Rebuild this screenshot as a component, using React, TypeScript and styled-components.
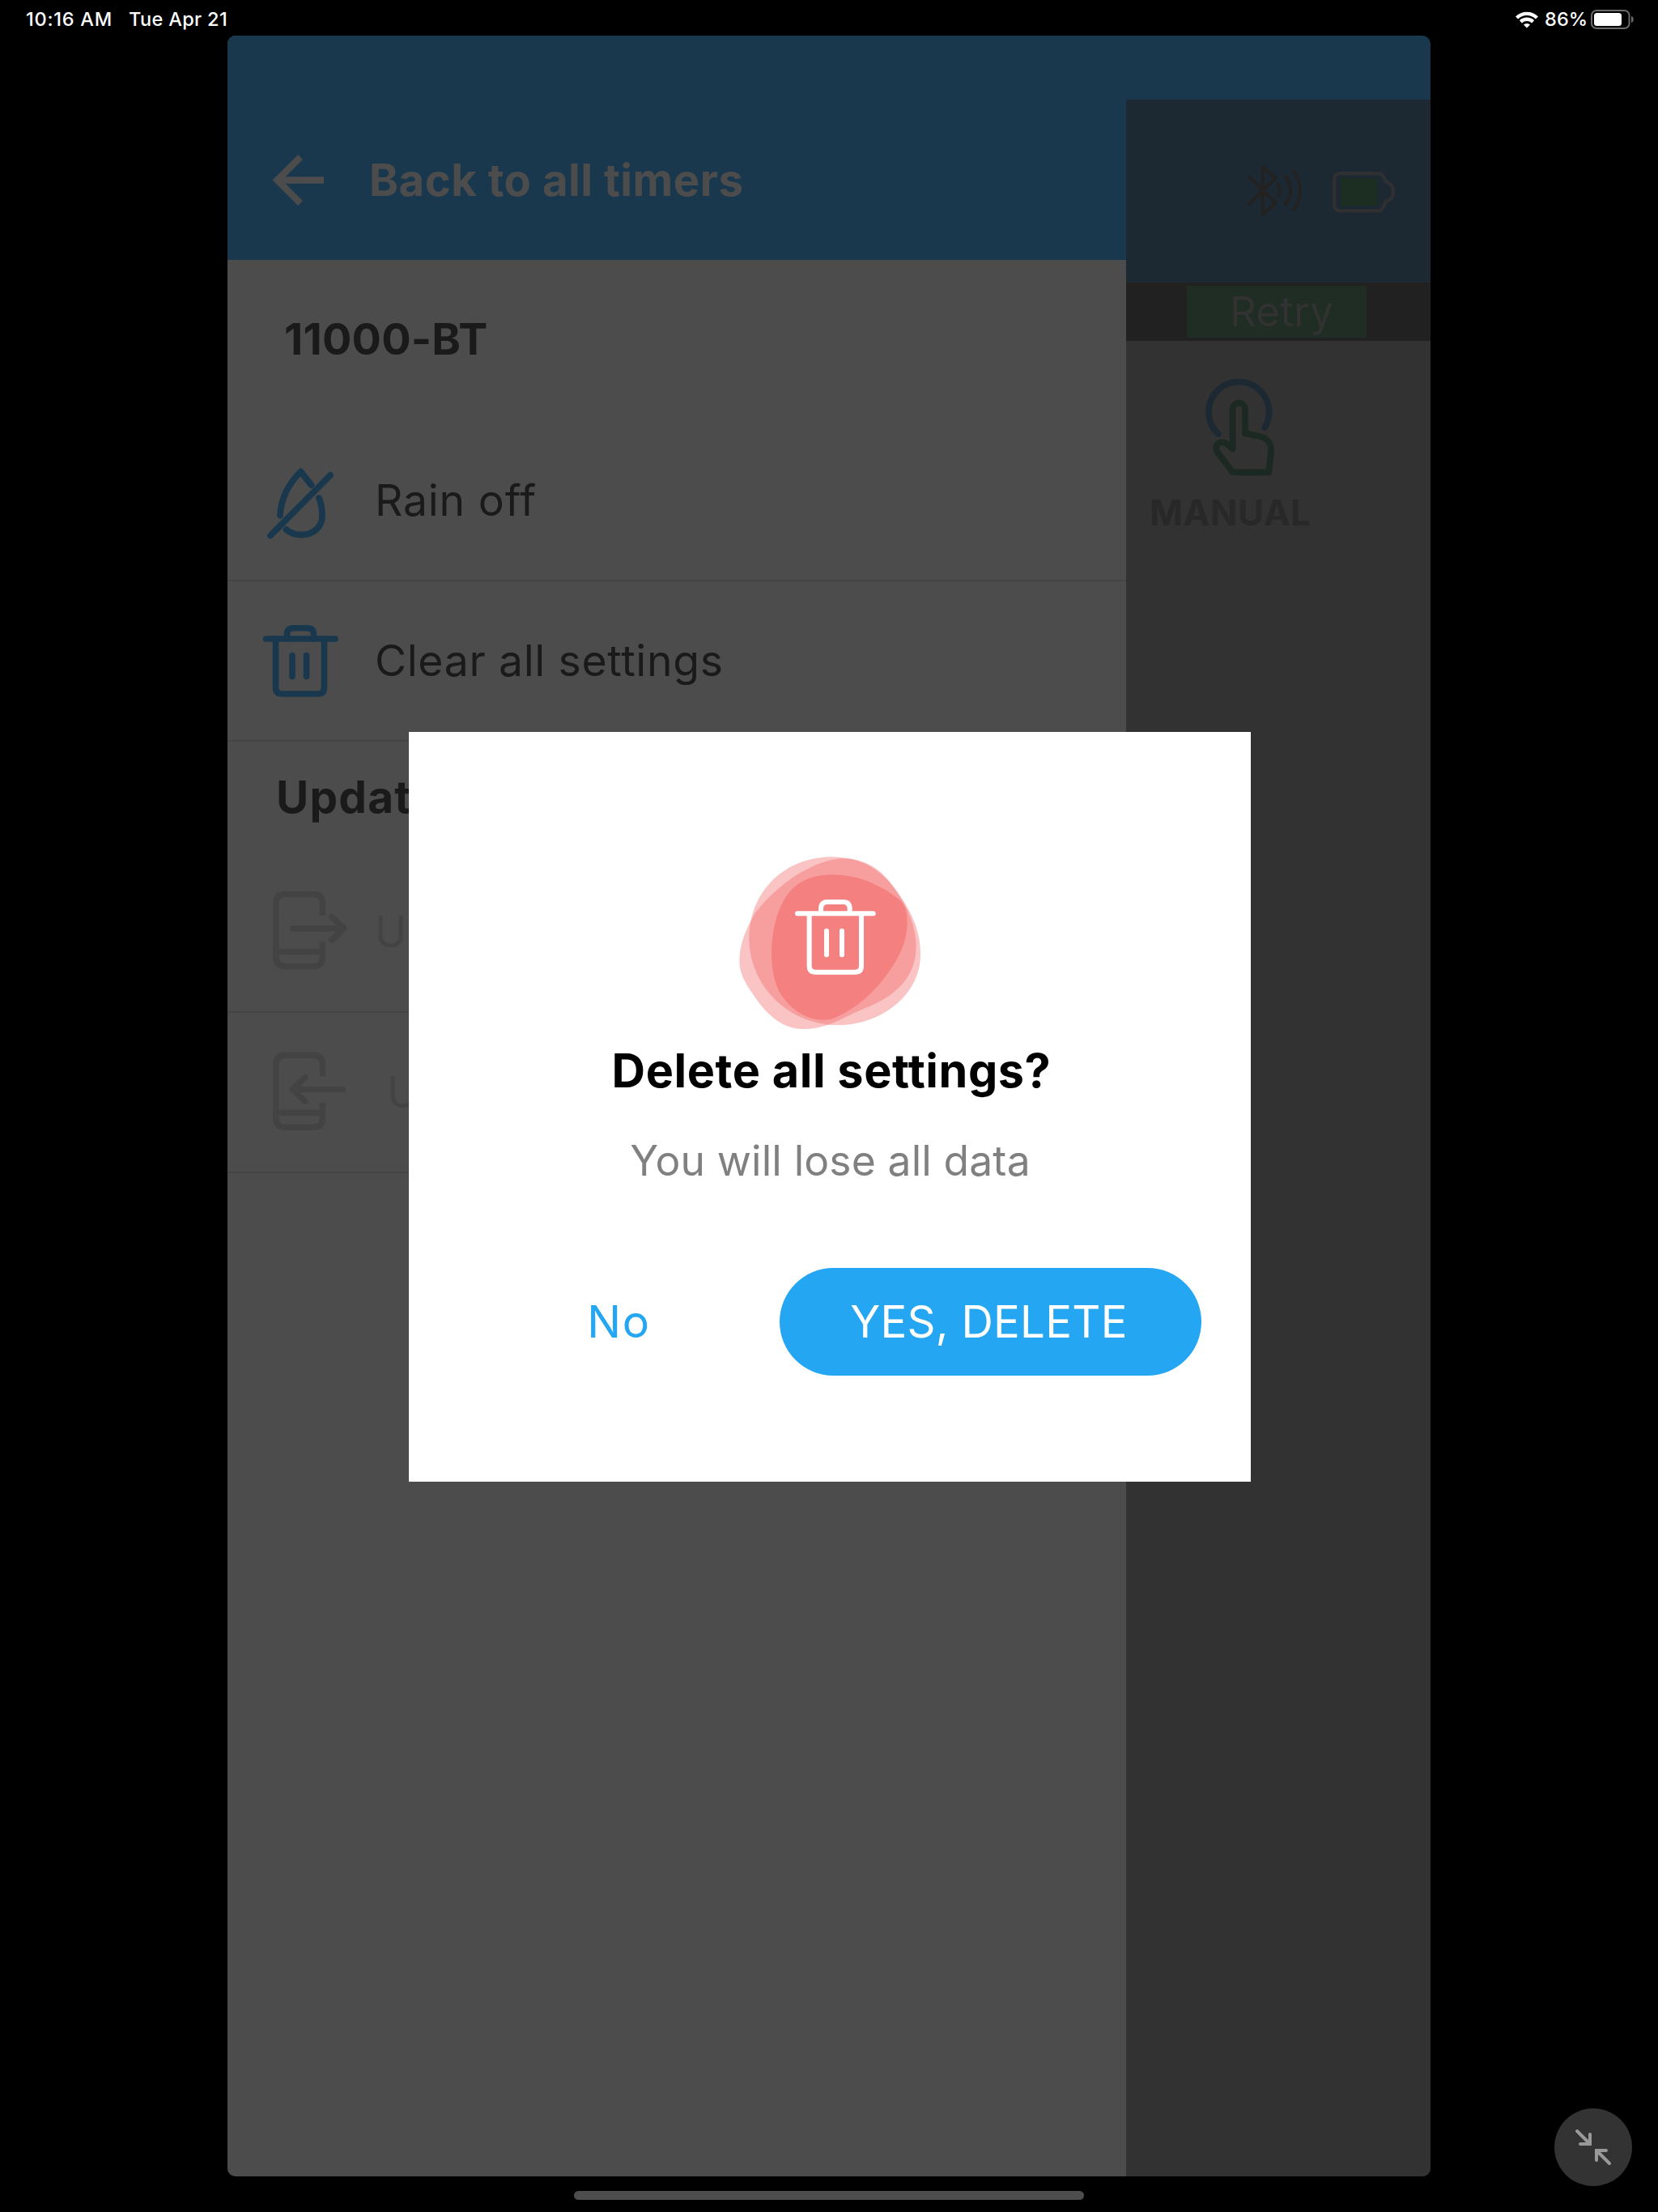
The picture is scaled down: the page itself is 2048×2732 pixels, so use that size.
import React from "react";
import styled, { createGlobalStyle } from "styled-components";

const GlobalStyle = createGlobalStyle`
  *, *::before, *::after { box-sizing: border-box; }
  body { margin: 0; background: #000; font-family: Inter, "Liberation Sans", sans-serif; }
  svg { display: block; flex: none; }
  button { border: 0; background: none; margin: 0; font-family: inherit; }
`;

const Screen = styled.div`
  position: relative;
  width: 2048px;
  height: 2732px;
  background: #000;
  display: flex;
  flex-direction: column;
  align-items: center;
  overflow: hidden;
`;

const Text = styled.span<{ $size: number; $gap: number; $weight?: number; $color: string }>`
  font-size: ${(p) => p.$size}px;
  letter-spacing: ${(p) => p.$gap}px;
  font-weight: ${(p) => p.$weight ?? 400};
  color: ${(p) => p.$color};
  line-height: 60px;
  white-space: nowrap;
`;

/* ---------- status bar ---------- */

const StatusBar = styled.header`
  align-self: stretch;
  height: 44px;
  padding: 4px 30px 0 32px;
  display: flex;
  align-items: center;
`;

const Time = styled.div`
  width: 127px;
  display: flex;
`;

const StatusRight = styled.div`
  margin-left: auto;
  display: flex;
  align-items: center;
`;

const Percent = styled.div`
  width: 65px;
  padding-left: 8px;
  display: flex;
`;

/* ---------- app window ---------- */

const Window = styled.main`
  position: relative;
  width: 1486px;
  height: 2644px;
  border-radius: 10px;
  overflow: hidden;
  background: #1a384d;
  display: flex;
`;

const Drawer = styled.nav`
  width: 1110px;
  background: #4c4c4c;
  display: flex;
  flex-direction: column;
`;

const DrawerHeader = styled.div`
  height: 277px;
  padding: 78px 0 0 55px;
  background: #1a384d;
  display: flex;
  align-items: center;
  gap: 56px;
`;

const DeviceName = styled.div`
  height: 198px;
  padding: 0 0 2px 70px;
  display: flex;
  align-items: center;
`;

const SectionTitle = styled.div`
  height: 137px;
  padding: 0 0 2px 60px;
  display: flex;
  align-items: center;
`;

const MenuRow = styled.div<{ $height?: number; $gap?: number }>`
  height: ${(p) => p.$height ?? 198}px;
  padding-left: 43px;
  border-bottom: 2px solid #444;
  display: flex;
  align-items: center;
  gap: ${(p) => p.$gap ?? 31}px;
`;

/* ---------- dimmed page behind the drawer ---------- */

const Side = styled.section`
  flex: 1;
  margin-top: 79px;
  background: #323232;
  display: flex;
  flex-direction: column;
`;

const SideHeader = styled.div`
  height: 226px;
  padding: 80px 44px 0 0;
  background: #1c2933;
  display: flex;
  justify-content: flex-end;
  align-items: flex-start;
  gap: 35px;
`;

const BatterySlot = styled.div`
  padding-top: 8px;
`;

const RetryStrip = styled.div`
  height: 72px;
  padding-left: 75px;
  background: #212121;
  display: flex;
  align-items: center;
`;

const Retry = styled.button`
  width: 222px;
  height: 64px;
  padding: 0 0 0 53px;
  background: #1f2d25;
  display: flex;
  align-items: center;
`;

const Manual = styled.div`
  padding: 44px 0 0 29px;
  display: flex;
  flex-direction: column;
  gap: 13px;
`;

const HandSlot = styled.div`
  padding-left: 65px;
`;

/* ---------- dialog ---------- */

const Dialog = styled.div`
  position: absolute;
  left: 224px;
  top: 860px;
  width: 1040px;
  height: 926px;
  padding-top: 154px;
  background: #fff;
  display: flex;
  flex-direction: column;
  align-items: center;
`;

const DialogTitle = styled.div`
  margin-top: 20px;
  padding-left: 4px;
  display: flex;
`;

const DialogBody = styled.div`
  margin-top: 51px;
  padding-left: 1px;
  display: flex;
`;

const Actions = styled.div`
  align-self: stretch;
  margin-top: 103px;
  padding: 0 61px 0 61px;
  display: flex;
`;

const NoButton = styled.button`
  flex: 1;
  padding: 0 0 1px;
  display: flex;
  align-items: center;
  justify-content: center;
`;

const YesButton = styled.button`
  width: 521px;
  height: 133px;
  padding: 0 4px 1px 0;
  border-radius: 67px;
  background: #24a6f2;
  display: flex;
  align-items: center;
  justify-content: center;
`;

/* ---------- system overlays ---------- */

const HomeIndicator = styled.div`
  width: 630px;
  height: 11px;
  margin-top: 18px;
  border-radius: 6px;
  background: #4d4d4d;
`;

const ShrinkButton = styled.button`
  position: absolute;
  right: 32px;
  bottom: 32px;
  width: 96px;
  height: 96px;
  padding: 0;
  border-radius: 50%;
  background: #333;
  display: flex;
  align-items: center;
  justify-content: center;
`;

/* ---------- icons ---------- */

const WifiIcon = () => (
  <svg width="28" height="21" viewBox="0 0 28 21" fill="none" stroke="#fff" strokeWidth="4.4">
    <path d="M1.6 8A17.5 17.5 0 0 1 26.4 8" />
    <path d="M6.4 12.9A10.8 10.8 0 0 1 21.6 12.9" />
    <path d="M14 20.6L9.9 16.6A6 6 0 0 1 18.1 16.6Z" fill="#fff" stroke="none" />
  </svg>
);

const PowerIcon = () => (
  <svg width="53" height="24" viewBox="0 0 53 24">
    <rect x="1" y="1" width="46.5" height="22" rx="6" fill="none" stroke="#6b6b6b" strokeWidth="2" />
    <rect x="4" y="4" width="34" height="16" rx="3.5" fill="#fff" />
    <path d="M50 7.8C53.6 9.3 53.6 14.7 50 16.2Z" fill="#6b6b6b" />
  </svg>
);

const BackIcon = () => (
  <svg width="64" height="64" viewBox="0 0 64 64" fill="none" stroke="#4c4c4c" strokeWidth="8.4">
    <path d="M64 32.5H7" />
    <path d="M35 4L6.500 32.5L35 61" />
  </svg>
);

const MenuIcon = ({ color, width, children }: { color: string; width: number; children: React.ReactNode }) => (
  <svg
    width="108"
    height="110"
    viewBox="0 0 108 110"
    fill="none"
    stroke={color}
    strokeWidth={width}
    strokeLinecap="round"
    strokeLinejoin="round"
  >
    {children}
  </svg>
);

const RainOffIcon = () => (
  <MenuIcon color="#1a384d" width={7.8}>
    <path d="M22 73.500C23 51 34 33 47.500 19.500L60.500 36" />
    <path d="M70 52C72.500 58 74 66 74 74C74 88 63 97.500 48 97.500C41 97.500 34 95 29.500 91" />
    <path d="M84 24L10 98.500" />
  </MenuIcon>
);

const TrashIcon = () => (
  <MenuIcon color="#1a384d" width={7.6}>
    <path d="M4.500 28H90" />
    <path d="M16.500 28V88Q16.500 96 24.500 96H68.500Q76.500 96 76.500 88V28" />
    <path d="M30.500 28V22.500Q30.500 14.800 38.500 14.800H55.500Q63.500 14.800 63.500 22.500V28" />
    <path d="M37 48.500V74.500M54.500 48.500V74.500" />
  </MenuIcon>
);

const PhoneFrame = () => (
  <>
    <path
      d="M74.500 34.500V20Q74.500 8.500 63 8.500H28.500Q16.700 8.500 16.700 20V86Q16.700 97.500 28.500 97.500H63Q74.500 97.500 74.500 86V67"
      strokeLinecap="butt"
    />
    <path d="M17 79.500H74" strokeLinecap="butt" />
  </>
);

const SendIcon = () => (
  <MenuIcon color="#434343" width={7.4}>
    <PhoneFrame />
    <path d="M38 50.700H100M86 36.500L101 50.700L86 65" />
  </MenuIcon>
);

const ReceiveIcon = () => (
  <MenuIcon color="#434343" width={7.4}>
    <g transform="translate(0 0.7)">
      <PhoneFrame />
      <path d="M99.500 50.700H38M53 36L37.500 50.700L53 65.500" />
    </g>
  </MenuIcon>
);

const BluetoothIcon = () => (
  <svg width="70" height="63.300" viewBox="60 70 210 190" fill="none" stroke="#242221" strokeWidth="12" strokeLinejoin="round">
    <path d="M66 113L166 212L119 254V78L166 122L66 220" />
    <path d="M174 142Q191 167 174 193M202 112Q243 167 202 221M231 92Q286 167 231 244" />
  </svg>
);

const DeviceBatteryIcon = () => (
  <svg width="78.300" height="51.700" viewBox="375 95 235 155">
    <rect x="407" y="122" width="137" height="103" fill="#1c2d22" />
    <path
      d="M405 105H546Q560 105 568 118L575 135Q603 145 603 173Q603 201 575 209L566 230Q560 243 546 243H405Q385 243 385 222V126Q385 105 405 105Z"
      fill="none"
      stroke="#303033"
      strokeWidth="13"
    />
  </svg>
);

const HandIcon = () => (
  <svg width="93.300" height="125" viewBox="345 405 280 375" fill="none" strokeWidth="23" strokeLinecap="round">
    <path d="M404 618A112 112 0 1 1 577 594" stroke="#1c2933" />
    <path
      d="M458 673V526A23 23 0 0 1 504 526V616L556 626C588 633 602 655 600 682L592 760H458L402 686C386 662 408 640 432 652Z"
      stroke="#1c2922"
      strokeLinejoin="round"
    />
  </svg>
);

const DeleteBadge = () => (
  <svg width="224.300" height="213.700" viewBox="99 83 673 641" fill="none">
    <path
      d="M440 84C545 84 612 125 662 185C722 258 771 340 771 445C771 600 620 707 465 707C280 707 136 560 136 385C136 210 270 84 440 84Z"
      fill="#f26161"
      fillOpacity="0.373"
    />
    <path
      d="M490 90C580 92 635 145 668 190C715 255 755 330 755 415C755 530 680 600 560 647C480 680 430 722 335 722C265 722 205 675 155 600C120 550 100 515 100 470C100 420 115 370 148 310C190 235 350 90 490 90Z"
      fill="#f26161"
      fillOpacity="0.373"
    />
    <path
      d="M440 150C545 150 625 190 690 240C712 258 722 285 722 325C722 400 690 460 650 515C600 585 540 640 460 678C450 684 435 688 415 688C350 688 290 650 255 595C230 555 219 500 219 440C219 370 235 290 270 235C305 180 360 150 440 150Z"
      fill="#f26161"
      fillOpacity="0.5"
    />
    <g stroke="#fff" strokeWidth="18" strokeLinecap="round">
      <path d="M315 294H596" />
      <path d="M359 296V488Q359 511 382 511H529Q552 511 552 488V296" />
      <path d="M402 290V276Q402 251 427 251H484Q509 251 509 276V290" />
      <path d="M423 358V447M480 358V447" />
    </g>
  </svg>
);

const ShrinkIcon = () => (
  <svg width="96" height="96" viewBox="0 0 96 96" fill="none" stroke="#999" strokeWidth="4" strokeLinecap="round">
    <path d="M28 28L44 44M44 32V44H32" />
    <path d="M68 68L52 52M52 64V52H64" />
  </svg>
);

export default function App() {
  return (
    <>
      <GlobalStyle />
      <Screen>
        <StatusBar>
          <Time>
            <Text $size={23.5} $gap={0.75} $weight={500} $color="#fff">10:16 AM</Text>
          </Time>
          <Text $size={23.5} $gap={0.34} $weight={500} $color="#fff">Tue Apr 21</Text>
          <StatusRight>
            <WifiIcon />
            <Percent>
              <Text $size={23.5} $gap={0.1} $weight={500} $color="#fff">86%</Text>
            </Percent>
            <PowerIcon />
          </StatusRight>
        </StatusBar>

        <Window>
          <Drawer>
            <DrawerHeader>
              <BackIcon />
              <Text $size={54.5} $gap={0.48} $weight={700} $color="#4c4c4c">Back to all timers</Text>
            </DrawerHeader>
            <DeviceName>
              <Text $size={54} $gap={0.2} $weight={700} $color="#1a1a1a">11000-BT</Text>
            </DeviceName>
            <MenuRow $height={199}>
              <RainOffIcon />
              <Text $size={53.5} $gap={0.8} $color="#1a1a1a">Rain off</Text>
            </MenuRow>
            <MenuRow>
              <TrashIcon />
              <Text $size={53.5} $gap={0.66} $color="#1a1a1a">Clear all settings</Text>
            </MenuRow>
            <SectionTitle>
              <Text $size={55} $gap={1.2} $weight={700} $color="#1a1a1a">Update</Text>
            </SectionTitle>
            <MenuRow>
              <SendIcon />
              <Text $size={53} $gap={1.2} $color="#434343">U</Text>
            </MenuRow>
            <MenuRow $gap={46}>
              <ReceiveIcon />
              <Text $size={53} $gap={1.2} $color="#434343">U</Text>
            </MenuRow>
          </Drawer>

          <Side>
            <SideHeader>
              <BluetoothIcon />
              <BatterySlot>
                <DeviceBatteryIcon />
              </BatterySlot>
            </SideHeader>
            <RetryStrip>
              <Retry>
                <Text $size={51} $gap={0.2} $color="#323232">Retry</Text>
              </Retry>
            </RetryStrip>
            <Manual>
              <HandSlot>
                <HandIcon />
              </HandSlot>
              <Text $size={44} $gap={0.5} $weight={700} $color="#282828">MANUAL</Text>
            </Manual>
          </Side>

          <Dialog role="dialog">
            <DeleteBadge />
            <DialogTitle>
              <Text $size={57.5} $gap={0.6} $weight={700} $color="#000">Delete all settings?</Text>
            </DialogTitle>
            <DialogBody>
              <Text $size={51.5} $gap={0.17} $color="#808080">You will lose all data</Text>
            </DialogBody>
            <Actions>
              <NoButton>
                <Text $size={55.5} $gap={1.6} $color="#24a6f2">No</Text>
              </NoButton>
              <YesButton>
                <Text $size={54.5} $gap={0.3} $color="#fff">YES, DELETE</Text>
              </YesButton>
            </Actions>
          </Dialog>
        </Window>

        <HomeIndicator />
        <ShrinkButton aria-label="Shrink">
          <ShrinkIcon />
        </ShrinkButton>
      </Screen>
    </>
  );
}
